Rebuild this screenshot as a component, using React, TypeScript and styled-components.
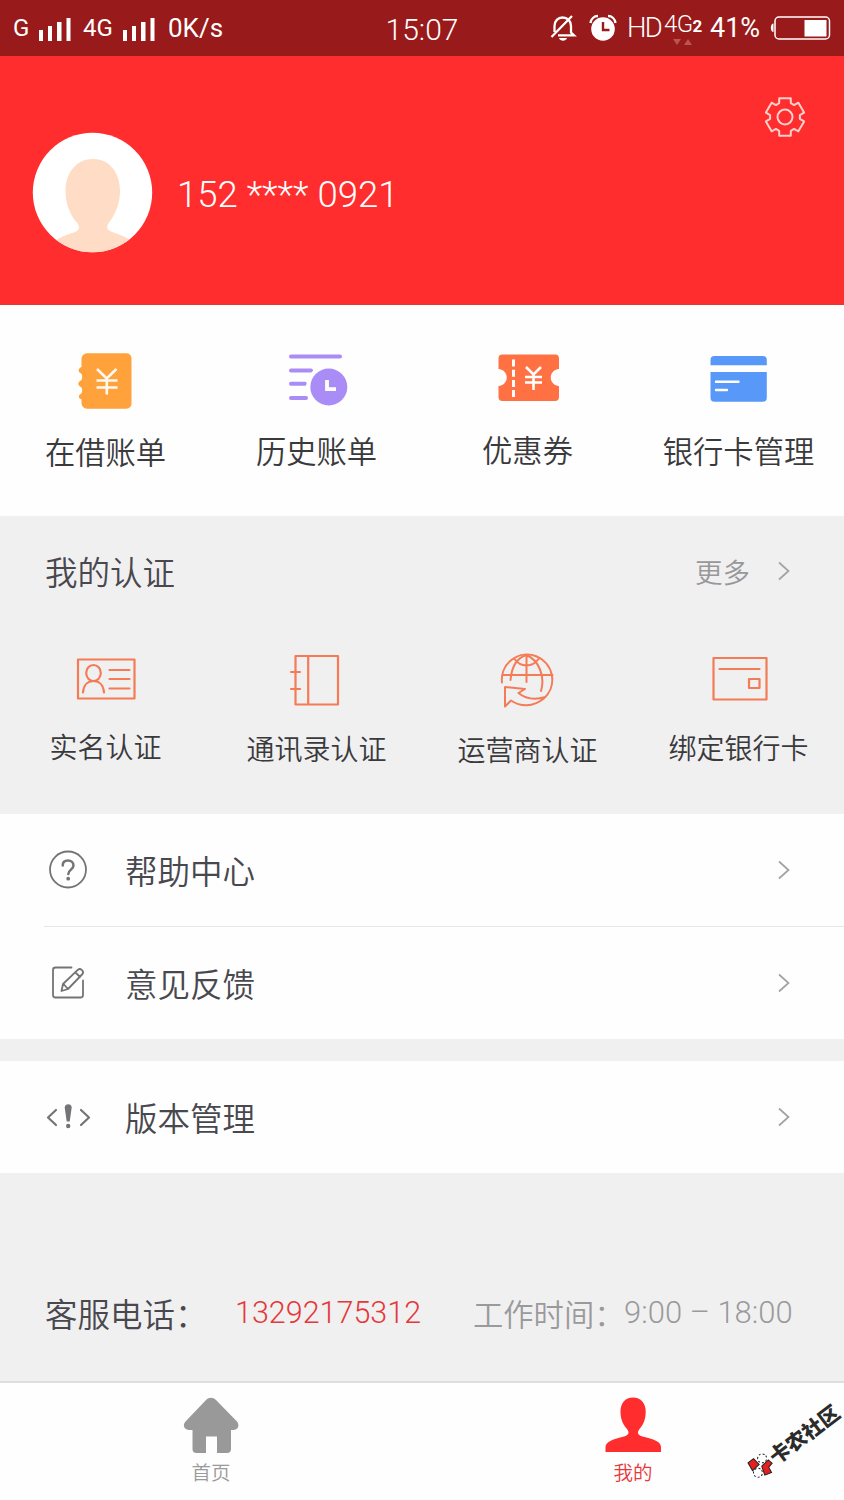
import React from 'react';
import styled, { createGlobalStyle } from 'styled-components';

const GlobalStyle = createGlobalStyle`
  * { box-sizing: border-box; }
  body { margin: 0; background: #f1f0f1; }
  svg { display: block; flex: none; }
`;

const latin = `Roboto, "Noto Sans CJK SC", sans-serif`;
const han = `"Noto Sans CJK SC", sans-serif`;

const Page = styled.div`
  width: 844px;
  height: 1500px;
  display: flex;
  flex-direction: column;
  background: #f1f0f1;
  font-family: ${han};
  font-weight: 350;
  white-space: nowrap;
  overflow: hidden;
  position: relative;
`;

const StatusBar = styled.header`
  height: 56px;
  flex: none;
  display: grid;
  grid-template-columns: 1fr 76px 1fr;
  background: #981a1a;
  color: #fff;
  font-family: ${latin};
`;

const StatusSide = styled.div<{ $end?: boolean }>`
  display: flex;
  align-items: center;
  justify-content: ${(p) => (p.$end ? 'flex-end' : 'flex-start')};
  padding: ${(p) => (p.$end ? '0 13px 0 0' : '0 0 0 13px')};
`;

const StatusText = styled.span<{ $size: number; $w: number; $gap?: number; $track?: number; $light?: boolean }>`
  font-size: ${(p) => p.$size}px;
  font-weight: ${(p) => (p.$light ? 300 : 400)};
  line-height: 56px;
  width: ${(p) => p.$w}px;
  height: 56px;
  margin-left: ${(p) => p.$gap ?? 0}px;
  letter-spacing: ${(p) => p.$track ?? 0}px;
`;

const Clock = styled.div`
  font-size: 30px;
  line-height: 60px;
  height: 56px;
  text-align: center;
`;

const NetworkMark = styled.div`
  width: 40px;
  height: 56px;
  margin-left: 4px;
  padding-top: 13px;
  display: flex;
  flex-direction: column;
`;

const NetworkName = styled.span`
  font-size: 24px;
  line-height: 23px;
  letter-spacing: -0.6px;
  b { font-size: 17px; font-weight: 700; }
`;

const Profile = styled.section`
  height: 249px;
  flex: none;
  display: flex;
  background: #ff2d2d;
  border-bottom: 1px solid #e03a34;
  padding: 76px 37px 0 32px;
`;

const Phone = styled.div`
  margin: 41px auto 0 24px;
  font: 300 36.5px/44px ${latin};
  color: #fff;
`;

const Settings = styled.div`
  margin-top: -37px;
`;

const Grid = styled.section<{ $tone: string; $height: number }>`
  height: ${(p) => p.$height}px;
  flex: none;
  display: grid;
  grid-template-columns: repeat(4, 211px);
  background: ${(p) => p.$tone};
`;

const Cell = styled.div<{ $drop: number }>`
  display: flex;
  flex-direction: column;
  align-items: center;
  gap: ${(p) => p.$drop}px;
`;

const Label = styled.span<{ $size: number }>`
  font-size: ${(p) => p.$size}px;
  line-height: 40px;
  color: #3a3a3c;
`;

const SectionHead = styled.div`
  height: 114px;
  flex: none;
  display: flex;
  align-items: center;
  padding: 0 53px 4px 45px;
`;

const Title = styled.span`
  font-size: 32.5px;
  line-height: 44px;
  color: #48484e;
  margin-right: auto;
`;

const More = styled.span`
  font-size: 27.5px;
  line-height: 40px;
  color: #98989a;
  margin-right: 27px;
`;

const List = styled.section`
  flex: none;
  background: #fefefe;
  margin-bottom: 22px;
`;

const Row = styled.div`
  height: 112px;
  display: flex;
  align-items: center;
  padding: 0 53px 0 44px;
`;

const RowIcon = styled.div`
  width: 48px;
  margin-right: 33px;
`;

const Divider = styled.div`
  height: 1px;
  margin-left: 44px;
  background: #e6e6e8;
`;

const Contact = styled.section`
  flex: 1;
  display: flex;
  align-items: flex-end;
  padding: 0 0 46px 45px;
`;

const ContactText = styled.span<{ $color: string; $size: number; $w: number; $weight?: number }>`
  font-size: ${(p) => p.$size}px;
  font-weight: ${(p) => p.$weight ?? 350};
  line-height: 44px;
  width: ${(p) => p.$w}px;
  color: ${(p) => p.$color};
`;

const Digits = styled(ContactText)`
  font-family: ${latin};
  font-weight: 300;
  position: relative;
`;

const TabBar = styled.nav`
  height: 119px;
  flex: none;
  display: grid;
  grid-template-columns: 1fr 1fr;
  background: #fefefe;
  border-top: 2px solid #dededf;
`;

const Tab = styled.div<{ $active?: boolean }>`
  display: flex;
  flex-direction: column;
  align-items: center;
  padding-top: 13px;
  font-size: 19.5px;
  line-height: 28px;
  color: ${(p) => (p.$active ? '#e8383a' : '#9a9a9a')};
  span { margin-top: 4px; }
`;

const Watermark = styled.div`
  position: absolute;
  left: 740px;
  top: 1427px;
  display: flex;
  align-items: center;
  transform: rotate(-37deg);
  font: 900 20.5px/28px ${han};
  color: #2b2b2b;
`;

const Signal = () => (
  <svg width="36" height="26" viewBox="0 0 36 26" fill="#fff">
    <path d="M2 15h4v11H2zM11 11h4v15h-4zM20 7h4.500v19H20zM29.500 3h4v23h-4z" />
  </svg>
);

const Chevron = () => (
  <svg width="14" height="22" viewBox="0 0 14 22" fill="none" stroke="#a2a2a4" strokeWidth="1.7">
    <path d="M2 2.500 11.500 11 2 19.500" />
  </svg>
);

const gearPath =
  [0, 1, 2, 3, 4, 5]
    .flatMap((k) =>
      [[15, -23], [19.6, -17], [19.6, 17], [15, 23]].map(([r, offset]) => {
        const a = ((k * 60 - 90 + offset) * Math.PI) / 180;
        return `${(22 + r * Math.cos(a)).toFixed(2)} ${(22 + r * Math.sin(a)).toFixed(2)}`;
      }),
    )
    .reduce((d, p, i) => d + (i ? 'L' : 'M') + p, '') + 'Z';

const Gear = () => (
  <svg width="44" height="44" viewBox="0 0 44 44" fill="none" stroke="#ffd0cc" strokeWidth="2" strokeLinejoin="round">
    <path d={gearPath} />
    <circle cx="22" cy="22" r="7.500" />
  </svg>
);

const Avatar = () => (
  <svg width="121" height="121" viewBox="32 132 121 121">
    <clipPath id="avatar"><circle cx="92.500" cy="192.500" r="59.700" /></clipPath>
    <circle cx="92.500" cy="192.500" r="59.700" fill="#fff" />
    <path clipPath="url(#avatar)" fill="#fedcc5" d="M93 159c16 0 27 13 27 32 0 13-5 24-12 33-2 5 0 6 4 8 12 4 20 8 25 14v14H49v-14c5-6 14-10 26-14 4-2 5-4 3-8-8-9-12.500-20-12.500-33 0-19 11.500-32 27.500-32z" />
  </svg>
);

const Ledger = () => (
  <svg width="80" height="80" viewBox="66 341 80 80">
    <path fill="#ffa23c" d="M87 353.300h39.500a5 5 0 0 1 5 5v45.400a5 5 0 0 1-5 5H87a5.500 5.500 0 0 1-5.500-5.500v-3.700c-3-1-3.500-4-1-5.500l1-.7c1-2 1-5-.5-6.300-3-1.500-3.500-4-1-6l1.500-1c1-2 1-5-.5-6.500-3-1.500-3-4.500-.5-6l1-.8v-7.900a5.500 5.500 0 0 1 5.500-5.500z" />
    <path fill="none" stroke="#fffaf0" strokeWidth="2.600" d="m97 369 9.700 9.500L116.500 369M96.500 380.500h21M96.500 387.500h21M106.800 378v16.500" />
  </svg>
);

const History = () => (
  <svg width="80" height="80" viewBox="276.500 341 80 80">
    <path stroke="#a98cf6" strokeWidth="4" fill="none" strokeLinecap="round" d="M290.500 356.500h49M290.500 370.500h20M290.500 383.800h14M290.500 398h15" />
    <circle cx="328.300" cy="387" r="22.500" fill="#fefefe" />
    <circle cx="328.300" cy="387" r="18.500" fill="#a98cf6" />
    <path stroke="#fff" strokeWidth="3.800" fill="none" d="M326.500 380v9.200h9" />
  </svg>
);

const Coupon = () => (
  <svg width="80" height="80" viewBox="487.500 341 80 80">
    <path fill="#ff7142" d="M502 354.500h52.500a4 4 0 0 1 4 4v10.500c-11 1-11 16 0 17v11a4 4 0 0 1-4 4H502a4 4 0 0 1-4-4v-11c11-1 11-16 0-17v-10.500a4 4 0 0 1 4-4z" />
    <path fill="none" stroke="#fff" strokeWidth="3" strokeDasharray="7 3.200" d="M513 359.500v37.500" />
    <path fill="none" stroke="#fff" strokeWidth="2.600" d="m525.500 367 7.500 7.500 7.500-7.500M524.500 377h17M524.500 382.500h17M533 374v16" />
  </svg>
);

const BankCard = () => (
  <svg width="80" height="80" viewBox="698.500 341 80 80">
    <path fill="#5898f8" d="M714 356h48.300a4 4 0 0 1 4 4v5.200H710V360a4 4 0 0 1 4-4zM710 372h56.300v25.700a4 4 0 0 1-4 4H714a4 4 0 0 1-4-4z" />
    <path stroke="#fff" strokeWidth="2.400" strokeLinecap="round" d="M715.500 381.700H738M715.500 390H726.500" />
  </svg>
);

const line = { fill: 'none', stroke: '#f47b55', strokeWidth: 2.2, strokeLinecap: 'round', strokeLinejoin: 'round' } as const;

const IdCard = () => (
  <svg width="80" height="80" viewBox="65.500 640 80 80" {...line}>
    <path d="M77.500 659.500h56.500v39H77.500zM109 670h20M109 679h20M109 688.500h20" />
    <ellipse cx="93" cy="673" rx="7.300" ry="8" />
    <path d="M82.500 692.500c.5-7 4.500-11.500 10.500-11.500s10 4.500 10.500 11.500" />
  </svg>
);

const Contacts = () => (
  <svg width="80" height="80" viewBox="276.500 640 80 80" {...line}>
    <path d="M295 656h42.500v48.500H295zM307.700 656v48.500M290.500 672h9M290.500 689h9" />
  </svg>
);

const Globe = () => (
  <svg width="80" height="80" viewBox="487.500 640 80 80" {...line} strokeWidth={2}>
    <path d="M501.500 682.500a25.200 25.200 0 1 1 41.500 16.300c-10.500 8.500-23 8.200-32.500 1.700l-6 6V687l20 2-6.500 4c9 7.500 18.500 6.500 27 4" />
    <path d="M502.500 675h49.500M526 655v27M526 655c-10 3-15 13-16 25M526 655c12 5 19 21 14.500 36M514 659c6 8.500 18 8.500 24 0" />
  </svg>
);

const Wallet = () => (
  <svg width="80" height="80" viewBox="698.500 640 80 80" {...line}>
    <path d="M713 658h53v41.500h-53zM719 669h40M748.500 679h10.500v9h-10.500z" />
  </svg>
);

const rowLine = { fill: 'none', stroke: '#747476', strokeWidth: 1.8, strokeLinecap: 'round', strokeLinejoin: 'round' } as const;

const Help = () => (
  <svg width="48" height="48" viewBox="0 0 48 48" {...rowLine}>
    <circle cx="24" cy="23.500" r="18" />
    <path strokeWidth="2.500" d="M18.700 19.500c0-3.300 2.200-5 5.300-5s5.500 1.900 5.500 4.900c0 4.100-5.200 4.300-5.200 8.600" />
    <circle cx="24.200" cy="32.700" r="1" fill="#747476" />
  </svg>
);

const Feedback = () => (
  <svg width="48" height="48" viewBox="0 0 48 48" {...rowLine}>
    <path d="M27.500 8.500H11.500a2.500 2.500 0 0 0-2.500 2.500v25a2.500 2.500 0 0 0 2.500 2.500h25a2.500 2.500 0 0 0 2.500-2.500V21.500" />
    <path d="m17.500 32 1.500-7 15-14.300c2.500-2 6.500 1.800 4.500 4.300L24 30zM19.500 25l4.500 5M31.500 13.500l4.500 4.500" />
  </svg>
);

const Version = () => (
  <svg width="48" height="48" viewBox="0 0 48 48" {...rowLine}>
    <path strokeWidth="2.200" d="m12 17-8 7.500 8 7.500M37 17l8 7.500-8 7.500" />
    <path stroke="none" fill="#747476" d="M20.700 14.500c0-4.500 7-4.500 7 0l-2 14h-3z" />
    <circle cx="24.200" cy="33" r="2.200" fill="#747476" stroke="none" />
  </svg>
);

const Home = () => (
  <svg width="56" height="58" viewBox="183 1398 56 58">
    <path fill="#999" d="M206 1402c3-3 7-3 10 0l20.500 21c3.500 4 2 8.500-3 9h-2.500v19a4 4 0 0 1-4 4H217v-16.500h-11V1455h-9.500a4 4 0 0 1-4-4v-19H189c-5-.5-7-5-3-9z" />
  </svg>
);

const Person = () => (
  <svg width="56" height="58" viewBox="604 1398 56 58">
    <path fill="#ff2d2d" d="M632 1399.500c8 0 12.700 6 12.700 14 0 8-2.200 13-6.200 17.500-3 4-1.500 6 3 7.500 11 3 18.500 4.500 18.500 11v4.500h-55.500v-4.500c0-6.500 8-8 18.500-11 4.500-1.500 6-3.500 3-7.500-4-4.500-6.500-9.500-6.500-17.500 0-8 4.500-14 12.500-14z" />
  </svg>
);

const shortcuts = [
  { label: '在借账单', Icon: Ledger, drop: 10 },
  { label: '历史账单', Icon: History, drop: 9 },
  { label: '优惠券', Icon: Coupon, drop: 8 },
  { label: '银行卡管理', Icon: BankCard, drop: 9 },
];

const certifications = [
  { label: '实名认证', Icon: IdCard, drop: 6 },
  { label: '通讯录认证', Icon: Contacts, drop: 8 },
  { label: '运营商认证', Icon: Globe, drop: 9 },
  { label: '绑定银行卡', Icon: Wallet, drop: 7 },
];

const ShortcutGrid = styled(Grid)`
  padding-top: 36px;
`;

const CertGrid = styled(Grid)`
  padding-top: 10px;
`;

const MenuRow = ({ label, icon }: { label: string; icon: React.ReactNode }) => (
  <Row>
    <RowIcon>{icon}</RowIcon>
    <Title>{label}</Title>
    <Chevron />
  </Row>
);

export default function App() {
  return (
    <Page>
      <GlobalStyle />
      <StatusBar>
        <StatusSide>
          <StatusText $size={24} $w={24}>G</StatusText>
          <Signal />
          <StatusText $size={24} $w={30} $gap={10}>4G</StatusText>
          <svg width="8" height="1" />
          <Signal />
          <StatusText $size={26} $w={60} $gap={11}>0K/s</StatusText>
        </StatusSide>
        <Clock>15:07</Clock>
        <StatusSide $end>
          <svg width="28" height="28" viewBox="0 0 28 28" fill="none" stroke="#fff" strokeWidth="2.300">
            <path d="M5.500 18V12c0-5 3.500-8.500 8-8.500 5 0 8.500 3.500 8.500 8.500v6.500l3 2.800H9M23 2 2.500 23" />
            <path fill="#fff" stroke="none" d="M10 24h8c-1 3.500-7 3.500-8 0z" />
          </svg>
          <svg style={{ marginLeft: 12 }} width="28" height="28" viewBox="0 0 28 28" fill="none">
            <circle cx="14" cy="15" r="11.800" fill="#fff" />
            <path stroke="#fff" strokeWidth="2.400" d="M1.500 9C2 5 5 2 9 2M26.500 9C26 5 23 2 19 2" />
            <path stroke="#981a1a" strokeWidth="2.400" d="M14 8v8h6.500" />
          </svg>
          <StatusText $size={27.5} $w={33} $gap={10} $track={-1.8} $light>HD</StatusText>
          <NetworkMark>
            <NetworkName>4G<b>2</b></NetworkName>
            <svg width="40" height="8" viewBox="0 0 40 8" fill="#bb5550">
              <path d="M9 1h8l-4 6zM20 7h8l-4-6z" />
            </svg>
          </NetworkMark>
          <StatusText $size={27} $w={52} $gap={6}>41%</StatusText>
          <svg style={{ marginLeft: 8 }} width="61" height="26" viewBox="0 0 61 26" fill="none">
            <rect x="5" y="2" width="54.500" height="22" rx="4" stroke="#fff" strokeWidth="1.500" />
            <path fill="#fff" d="M34.500 5h22v16.500h-22zM3.500 8.500v8.500C0 17 0 8.500 3.500 8.500z" />
          </svg>
        </StatusSide>
      </StatusBar>

      <Profile>
        <Avatar />
        <Phone>152 **** 0921</Phone>
        <Settings><Gear /></Settings>
      </Profile>

      <ShortcutGrid $tone="#fefefe" $height={211}>
        {shortcuts.map(({ label, Icon, drop }) => (
          <Cell key={label} $drop={drop}><Icon /><Label $size={30.3}>{label}</Label></Cell>
        ))}
      </ShortcutGrid>

      <SectionHead>
        <Title>我的认证</Title>
        <More>更多</More>
        <Chevron />
      </SectionHead>
      <CertGrid $tone="#f1f0f1" $height={184}>
        {certifications.map(({ label, Icon, drop }) => (
          <Cell key={label} $drop={drop}><Icon /><Label $size={28}>{label}</Label></Cell>
        ))}
      </CertGrid>

      <List>
        <MenuRow label="帮助中心" icon={<Help />} />
        <Divider />
        <MenuRow label="意见反馈" icon={<Feedback />} />
      </List>
      <List style={{ marginBottom: 0 }}>
        <MenuRow label="版本管理" icon={<Version />} />
      </List>

      <Contact>
        <ContactText $color="#48484e" $size={32.5} $w={190}>客服电话：</ContactText>
        <Digits $color="#e5383a" $size={30.5} $w={238}>13292175312</Digits>
        <ContactText $color="#9a9a9c" $size={30.3} $w={151}>工作时间：</ContactText>
        <Digits $color="#9a9a9c" $size={31} $w={180}>9:00 – 18:00</Digits>
      </Contact>

      <TabBar>
        <Tab><Home /><span>首页</span></Tab>
        <Tab $active><Person /><span>我的</span></Tab>
      </TabBar>

      <Watermark>
        <svg width="25" height="26" viewBox="0 0 25 26" stroke="#222" strokeWidth="1">
          <circle cx="6" cy="17" r="4.500" fill="#fff" strokeDasharray="2 2" />
          <circle cx="18" cy="8" r="4.500" fill="#fff" strokeDasharray="2 2" />
          <path fill="#e3201f" d="m4 3 7 0 1 8-9 1zM13 14l9-1 1 5-5 1-1 6-7-2z" />
        </svg>
        卡农社区
      </Watermark>
    </Page>
  );
}
